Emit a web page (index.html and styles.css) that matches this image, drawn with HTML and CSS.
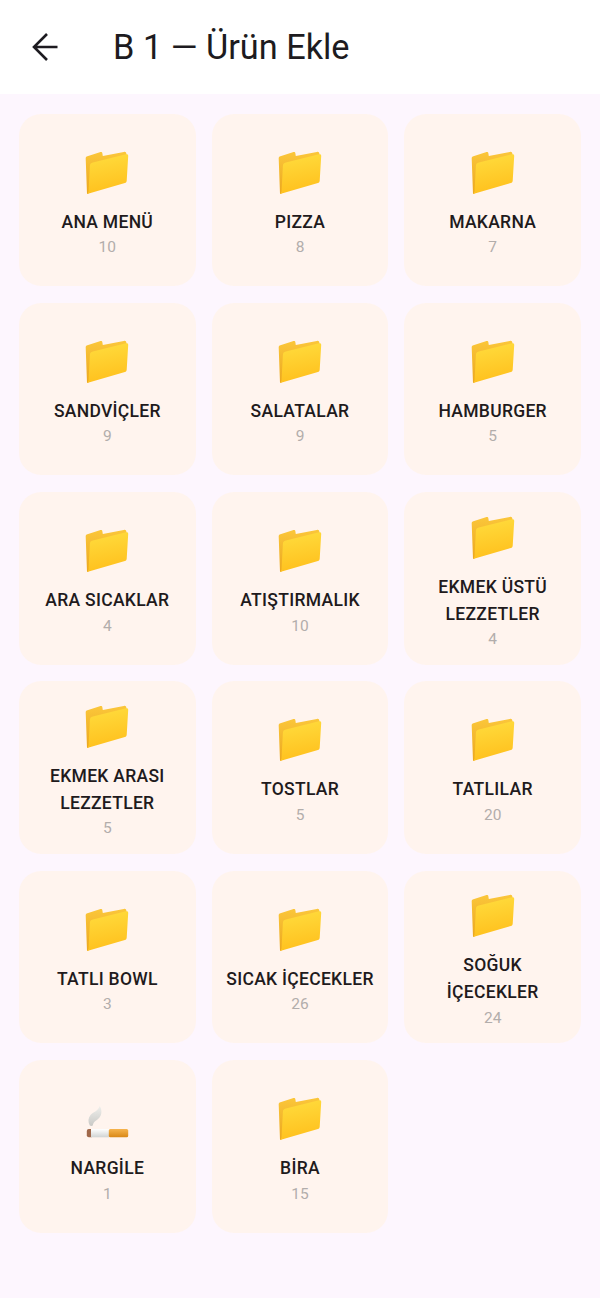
FILE: index.html
```html
<!DOCTYPE html>
<html lang="tr">
<head>
<meta charset="utf-8">
<title>B 1 — Ürün Ekle</title>
<link rel="stylesheet" href="styles.css">
</head>
<body>
<svg class="defs" width="0" height="0" aria-hidden="true">
  <defs>
    <linearGradient id="fg" x1="0.4" y1="0" x2="0.6" y2="1">
      <stop offset="0" stop-color="#FFDB3C"/>
      <stop offset="1" stop-color="#FFBF1C"/>
    </linearGradient>
    <linearGradient id="bk" x1="0" y1="0" x2="0" y2="1">
      <stop offset="0" stop-color="#FBC63A"/>
      <stop offset="1" stop-color="#EBA71F"/>
    </linearGradient>
    <linearGradient id="cig" x1="0" y1="0" x2="0" y2="1">
      <stop offset="0" stop-color="#F6B44E"/>
      <stop offset="1" stop-color="#D98716"/>
    </linearGradient>
    <linearGradient id="pap" x1="0" y1="0" x2="0" y2="1">
      <stop offset="0" stop-color="#FFFFFF"/>
      <stop offset="1" stop-color="#D0D3D2"/>
    </linearGradient>
    <linearGradient id="smk" x1="0" y1="0" x2="0" y2="1">
      <stop offset="0" stop-color="#EFEFEC"/>
      <stop offset="1" stop-color="#C9C9C6"/>
    </linearGradient>
    <symbol id="folder" viewBox="0 0 44 44">
      <path d="M.7 8.500C.6 7.300 1.300 6.500 2.400 6.200L14.800 2.200C16.300 1.700 17.200 2 17.400 3.500L17.800 6 38.800 1.900C40.400 1.600 41.300 2.300 41.400 3.800L41.500 8 8 22 3.600 43.500 2 44z" fill="url(#bk)"/>
      <path d="M7.800 12.600 41 4.300C42.400 3.900 43.300 4.600 43.200 6L41.700 30.800C41.600 32 41 32.700 39.900 33L3.800 43.500 2 44C3 43.400 3.400 42.600 3.500 41.500L4.900 15.800C5 14 6 13 7.800 12.600z" fill="url(#fg)"/>
    </symbol>
    <symbol id="cigarette" viewBox="0 0 44 44">
      <path d="M4.800 29.500C2.800 26 3 22 5.500 19 8 16 12.800 15.500 14.800 10 17 13.500 17 18.500 14.500 21.500 12 24.500 8.500 25 7.800 29.500 7 30 5.800 30 4.800 29.500z" fill="url(#smk)"/>
      <rect x="1.800" y="33" width="6.500" height="8.300" rx="2" fill="#A0684A"/>
      <rect x="6" y="33" width="18" height="8.300" fill="url(#pap)"/>
      <rect x="23.800" y="33" width="19.400" height="8.300" rx="1.500" fill="url(#cig)"/>
    </symbol>
  </defs>
</svg>
<header class="appbar">
  <svg class="back" viewBox="0 0 28 32" width="28" height="32" aria-label="Geri"><path d="M26.500 16H4M16 3 3 16l13 13" fill="none" stroke="#1D1B20" stroke-width="2.600"/></svg>
  <h1 class="title">B 1 — Ürün Ekle</h1>
</header>
<main class="grid">
  <a class="card"><svg class="ico"><use href="#folder"/></svg><span class="name">ANA MENÜ</span><span class="count">10</span></a>
  <a class="card"><svg class="ico"><use href="#folder"/></svg><span class="name">PIZZA</span><span class="count">8</span></a>
  <a class="card"><svg class="ico"><use href="#folder"/></svg><span class="name">MAKARNA</span><span class="count">7</span></a>
  <a class="card"><svg class="ico"><use href="#folder"/></svg><span class="name">SANDVİÇLER</span><span class="count">9</span></a>
  <a class="card"><svg class="ico"><use href="#folder"/></svg><span class="name">SALATALAR</span><span class="count">9</span></a>
  <a class="card"><svg class="ico"><use href="#folder"/></svg><span class="name">HAMBURGER</span><span class="count">5</span></a>
  <a class="card"><svg class="ico"><use href="#folder"/></svg><span class="name">ARA SICAKLAR</span><span class="count">4</span></a>
  <a class="card"><svg class="ico"><use href="#folder"/></svg><span class="name">ATIŞTIRMALIK</span><span class="count">10</span></a>
  <a class="card"><svg class="ico"><use href="#folder"/></svg><span class="name">EKMEK ÜSTÜ LEZZETLER</span><span class="count">4</span></a>
  <a class="card"><svg class="ico"><use href="#folder"/></svg><span class="name">EKMEK ARASI LEZZETLER</span><span class="count">5</span></a>
  <a class="card"><svg class="ico"><use href="#folder"/></svg><span class="name">TOSTLAR</span><span class="count">5</span></a>
  <a class="card"><svg class="ico"><use href="#folder"/></svg><span class="name">TATLILAR</span><span class="count">20</span></a>
  <a class="card"><svg class="ico"><use href="#folder"/></svg><span class="name">TATLI BOWL</span><span class="count">3</span></a>
  <a class="card"><svg class="ico"><use href="#folder"/></svg><span class="name">SICAK İÇECEKLER</span><span class="count">26</span></a>
  <a class="card"><svg class="ico"><use href="#folder"/></svg><span class="name">SOĞUK İÇECEKLER</span><span class="count">24</span></a>
  <a class="card"><svg class="ico"><use href="#cigarette"/></svg><span class="name">NARGİLE</span><span class="count">1</span></a>
  <a class="card"><svg class="ico"><use href="#folder"/></svg><span class="name">BİRA</span><span class="count">15</span></a>
</main>
</body>
</html>
```
FILE: styles.css
```css
* { box-sizing: border-box; }
html, body { margin: 0; height: 100%; }
body {
  background: #FDF6FE;
  font-family: Roboto, "Noto Sans", sans-serif;
  color: #1D1B20;
  overflow: hidden;
}
.defs { display: block; height: 0; }
.appbar {
  height: 94px;
  background: #FFFFFF;
  display: flex;
  align-items: center;
  padding-left: 30.500px;
  gap: 54.500px;
}
.back { flex: none; }
.title {
  margin: 0;
  font-size: 34.300px;
  font-weight: 400;
  line-height: 40px;
  white-space: nowrap;
}
.grid {
  display: grid;
  grid-template-columns: repeat(3, 1fr);
  grid-auto-rows: 172.500px;
  column-gap: 16px;
  row-gap: 16.830px;
  padding: 19.500px 19px 0;
}
.card {
  background: #FFF4EE;
  border-radius: 22px;
  display: flex;
  flex-direction: column;
  align-items: center;
  justify-content: center;
  padding: 8px 12px 0;
  text-align: center;
}
.ico { width: 44px; height: 44px; flex: none; margin-bottom: 15px; }
.name {
  font-size: 17.500px;
  font-weight: 500;
  line-height: 27px;
  letter-spacing: 0.300px;
  color: #211A1C;
}
.count {
  font-size: 15.500px;
  line-height: 22px;
  color: #B2ADAB;
  margin-top: 0.500px;
}
```
